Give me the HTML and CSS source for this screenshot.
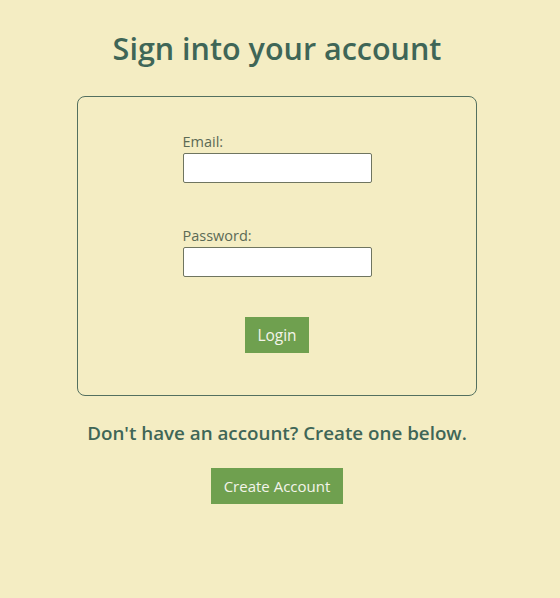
FILE: index.html
```html
<!DOCTYPE html>
<html lang="en">
  <head>
    <meta charset="UTF-8" />
    <meta name="viewport" content="width=device-width, initial-scale=1.0" />
    <title>Sign in</title>
    <link rel="stylesheet" href="styles.css">
  </head>
  <body>
    <div class="page">
      <h1 class="page-title">Sign into your account</h1>

      <form class="login-card" id="loginForm">
        <div class="login-field">
          <label for="email">Email:</label>
          <input class="login-input" type="email" id="email" />
        </div>
        <div class="login-field">
          <label for="password">Password:</label>
          <input class="login-input" type="password" id="password" />
        </div>
        <button class="button-green" type="button">Login</button>
      </form>

      <p class="signup-text">Don't have an account? Create one below.</p>
      <button class="button-green" type="button">Create Account</button>
    </div>
  </body>
</html>
```

FILE: styles.css
```css
* {
  margin: 0;
  padding: 0;
  box-sizing: border-box;
  font-family: "Open Sans", sans-serif;
}

body {
  background-color: #f4edc3;
  color: #3f6657;
}

.page {
  width: 554px;
  display: flex;
  flex-direction: column;
  align-items: center;
  padding-top: 26px;
}

.page-title {
  font-size: 30.5px;
  font-weight: 600;
  line-height: 44px;
}

.login-card {
  margin-top: 26px;
  width: 400px;
  height: 300px;
  border: 1px solid #53705f;
  border-radius: 8px;
  display: flex;
  flex-direction: column;
  align-items: center;
  padding-top: 34px;
}

.login-field {
  display: flex;
  flex-direction: column;
  width: 189px;
  margin-bottom: 42px;
}

.login-field label {
  font-size: 14.5px;
  line-height: 22px;
  color: #5b6a55;
}

.login-input {
  height: 30px;
  border: 1px solid #6f7560;
  border-radius: 2px;
  background: white;
}

.button-green {
  border: none;
  background-color: #6fa04f;
  color: #f4f4ea;
  font-size: 15.5px;
  height: 36px;
  padding: 0 8px;
  white-space: nowrap;
  cursor: pointer;
}

.login-card .button-green {
  margin-top: -2px;
  width: 64px;
}

.signup-text {
  margin-top: 24px;
  font-size: 18.8px;
  font-weight: 600;
  line-height: 26px;
}

.signup-text + .button-green {
  margin-top: 22px;
  width: 132px;
  font-size: 15px;
}
```
